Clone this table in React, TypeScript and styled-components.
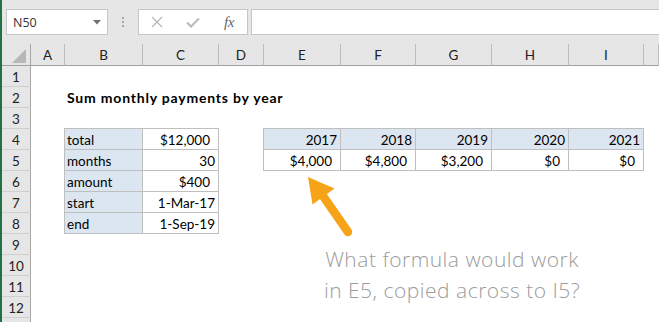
import React from "react";
import styled, { createGlobalStyle } from "styled-components";

const GlobalStyle = createGlobalStyle`
  html, body { margin: 0; padding: 0; background: #ffffff; }
  body { font-family: Lato, "Liberation Sans", sans-serif; }
  #root { width: 659px; height: 322px; }
`;

const Window = styled.div`
  width: 659px;
  height: 322px;
  overflow: hidden;
  display: flex;
  flex-direction: column;
  box-sizing: border-box;
  border-left: 2px solid #217346;
  background: #ffffff;
`;

const Toolbar = styled.div`
  flex: none;
  height: 44px;
  box-sizing: border-box;
  padding: 9px 0 0 4px;
  background: #e6e6e6;
  display: flex;
  align-items: flex-start;
`;

const NameBox = styled.div`
  box-sizing: border-box;
  width: 102px;
  height: 26px;
  border: 1px solid #c6c6c6;
  background: #ffffff;
  display: flex;
  align-items: center;
  justify-content: space-between;
  padding: 0 6px 0 6px;
  font-family: "Open Sans", "Noto Sans", sans-serif;
  font-size: 12.5px;
  color: #333333;
`;

const Grip = styled.div`
  margin: 8px 0 0 14px;
  display: flex;
  flex-direction: column;
  gap: 2px;
`;

const GripDot = styled.span`
  display: block;
  width: 2px;
  height: 2px;
  background: #a8a8a8;
`;

const FxBox = styled.div`
  box-sizing: border-box;
  margin-left: 14px;
  width: 110px;
  height: 26px;
  border: 1px solid #c6c6c6;
  background: #ffffff;
  display: flex;
`;

const FxSlot = styled.div`
  width: 36px;
  display: flex;
  align-items: center;
  justify-content: center;
`;

const FxLabel = styled.span`
  font-family: "Liberation Serif", "DejaVu Serif", serif;
  font-style: italic;
  font-size: 15px;
  color: #666666;
  letter-spacing: -0.5px;
`;

const FormulaInput = styled.div`
  box-sizing: border-box;
  margin-left: 3px;
  flex: 1;
  height: 26px;
  border: 1px solid #c6c6c6;
  border-right: none;
  background: #ffffff;
`;

const Sheet = styled.div`
  position: relative;
  flex: 1;
  display: grid;
  grid-template-columns: 29px 34px 78px 76px 45px 77px 75px 76px 77px 75px 1fr;
  grid-template-rows: 22px;
  grid-auto-rows: 21px;
  font-size: 13.5px;
  line-height: 16px;
  color: #000000;
`;

const HeadBase = styled.div`
  box-sizing: border-box;
  background: #e6e6e6;
  color: #222222;
  display: flex;
  justify-content: center;
  align-items: flex-end;
`;

const Corner = styled(HeadBase)`
  justify-content: flex-end;
  padding: 0 4px 2px 0;
  border-right: 1px solid #a6a6a6;
  border-bottom: 1px solid #a0a0a0;
`;

const ColHead = styled(HeadBase)`
  padding-bottom: 2px;
  border-right: 1px solid #bdbdbd;
  border-bottom: 1px solid #a0a0a0;
`;

const RowHead = styled(HeadBase)`
  padding-bottom: 1px;
  border-right: 1px solid #a6a6a6;
  border-bottom: 1px solid #cfcfcf;
`;

type CellProps = {
  $fill?: boolean;
  $bordered?: boolean;
  $align?: "left" | "right";
  $bold?: boolean;
  $currency?: boolean;
};

const GRID = "#bfbfbf";

const Cell = styled.div<CellProps>`
  box-sizing: border-box;
  min-width: 0;
  display: flex;
  align-items: flex-end;
  justify-content: ${(p) => (p.$align === "right" ? "flex-end" : "flex-start")};
  padding: 0 ${(p) => (p.$currency ? 8 : 3)}px 1px 2px;
  background: ${(p) => (p.$fill ? "#dce6f1" : "transparent")};
  border-right: 1px solid ${(p) => (p.$bordered ? GRID : "transparent")};
  border-bottom: 1px solid ${(p) => (p.$bordered ? GRID : "transparent")};
  box-shadow: ${(p) =>
    p.$bordered
      ? `-1px 0 0 0 ${GRID}, 0 -1px 0 0 ${GRID}, -1px -1px 0 0 ${GRID}`
      : "none"};
  font-weight: ${(p) => (p.$bold ? 700 : 400)};
  font-size: ${(p) => (p.$bold ? "14px" : "13.5px")};
  letter-spacing: ${(p) => (p.$bold ? "0.8px" : "0")};
  white-space: nowrap;
`;

const ArrowShape = styled.svg`
  position: absolute;
  left: 294px;
  top: 126px;
  overflow: visible;
`;

const Note = styled.div`
  position: absolute;
  left: 298px;
  top: 200px;
  width: 304px;
  text-align: center;
  font-family: "Open Sans", "Noto Sans", sans-serif;
  font-weight: 300;
  font-size: 21px;
  letter-spacing: 0.5px;
  line-height: 31px;
  color: #9c9c9c;
  white-space: nowrap;
`;

const COLS = ["A", "B", "C", "D", "E", "F", "G", "H", "I", "J"];
const ROWS = Array.from({ length: 13 }, (_, i) => i + 1);
const VISIBLE_ROW_LABELS = 12;

type Spec = {
  text?: string;
  fill?: boolean;
  bordered?: boolean;
  align?: "left" | "right";
  bold?: boolean;
  currency?: boolean;
};

const cells: Record<string, Spec> = {
  B2: { text: "Sum monthly payments by year", bold: true },
};

const inputs: [string, string, boolean][] = [
  ["total", "$12,000", true],
  ["months", "30", false],
  ["amount", "$400", true],
  ["start", "1-Mar-17", false],
  ["end", "1-Sep-19", false],
];
inputs.forEach(([label, value, cur], i) => {
  const r = 4 + i;
  cells[`B${r}`] = { text: label, fill: true, bordered: true };
  cells[`C${r}`] = { text: value, bordered: true, align: "right", currency: cur };
});

const years = ["2017", "2018", "2019", "2020", "2021"];
const totals = ["$4,000", "$4,800", "$3,200", "$0", "$0"];
["E", "F", "G", "H", "I"].forEach((c, i) => {
  cells[`${c}4`] = { text: years[i], fill: true, bordered: true, align: "right" };
  cells[`${c}5`] = { text: totals[i], bordered: true, align: "right", currency: true };
});

export default function App() {
  return (
    <>
      <GlobalStyle />
      <Window>
        <Toolbar>
          <NameBox>
            <span>N50</span>
            <svg width="8" height="5" viewBox="0 0 8 5">
              <polygon points="0,0 8,0 4,4.5" fill="#707070" />
            </svg>
          </NameBox>
          <Grip>
            <GripDot />
            <GripDot />
            <GripDot />
          </Grip>
          <FxBox>
            <FxSlot>
              <svg width="12" height="12" viewBox="0 0 12 12">
                <path d="M1 1 L11 11 M11 1 L1 11" stroke="#b9b9b9" strokeWidth="1.3" fill="none" />
              </svg>
            </FxSlot>
            <FxSlot>
              <svg width="14" height="11" viewBox="0 0 14 11">
                <path d="M1 5.5 L5 9.5 L13 1.5" stroke="#b9b9b9" strokeWidth="2" fill="none" />
              </svg>
            </FxSlot>
            <FxSlot>
              <FxLabel>fx</FxLabel>
            </FxSlot>
          </FxBox>
          <FormulaInput />
        </Toolbar>
        <Sheet>
          <Corner>
            <svg width="14" height="14" viewBox="0 0 14 14">
              <polygon points="14,0 14,14 0,14" fill="#b7b7b7" />
            </svg>
          </Corner>
          {COLS.map((c) => (
            <ColHead key={c}>{c === "J" ? "" : c}</ColHead>
          ))}
          {ROWS.map((r) => (
            <React.Fragment key={r}>
              <RowHead>{r <= VISIBLE_ROW_LABELS ? r : ""}</RowHead>
              {COLS.map((c) => {
                const s = cells[`${c}${r}`] ?? {};
                return (
                  <Cell
                    key={c}
                    $fill={s.fill}
                    $bordered={s.bordered}
                    $align={s.align}
                    $bold={s.bold}
                    $currency={s.currency}
                  >
                    {s.text}
                  </Cell>
                );
              })}
            </React.Fragment>
          ))}
          <ArrowShape width="64" height="72" viewBox="0 0 64 72">
            <line x1="27" y1="26" x2="52" y2="62" stroke="#f7a318" strokeWidth="8.5" strokeLinecap="round" />
            <polygon points="12,7 16.5,34.5 38.5,18.5" fill="#f7a318" />
          </ArrowShape>
          <Note>
            What formula would work
            <br />
            in E5, copied across to I5?
          </Note>
        </Sheet>
      </Window>
    </>
  );
}
